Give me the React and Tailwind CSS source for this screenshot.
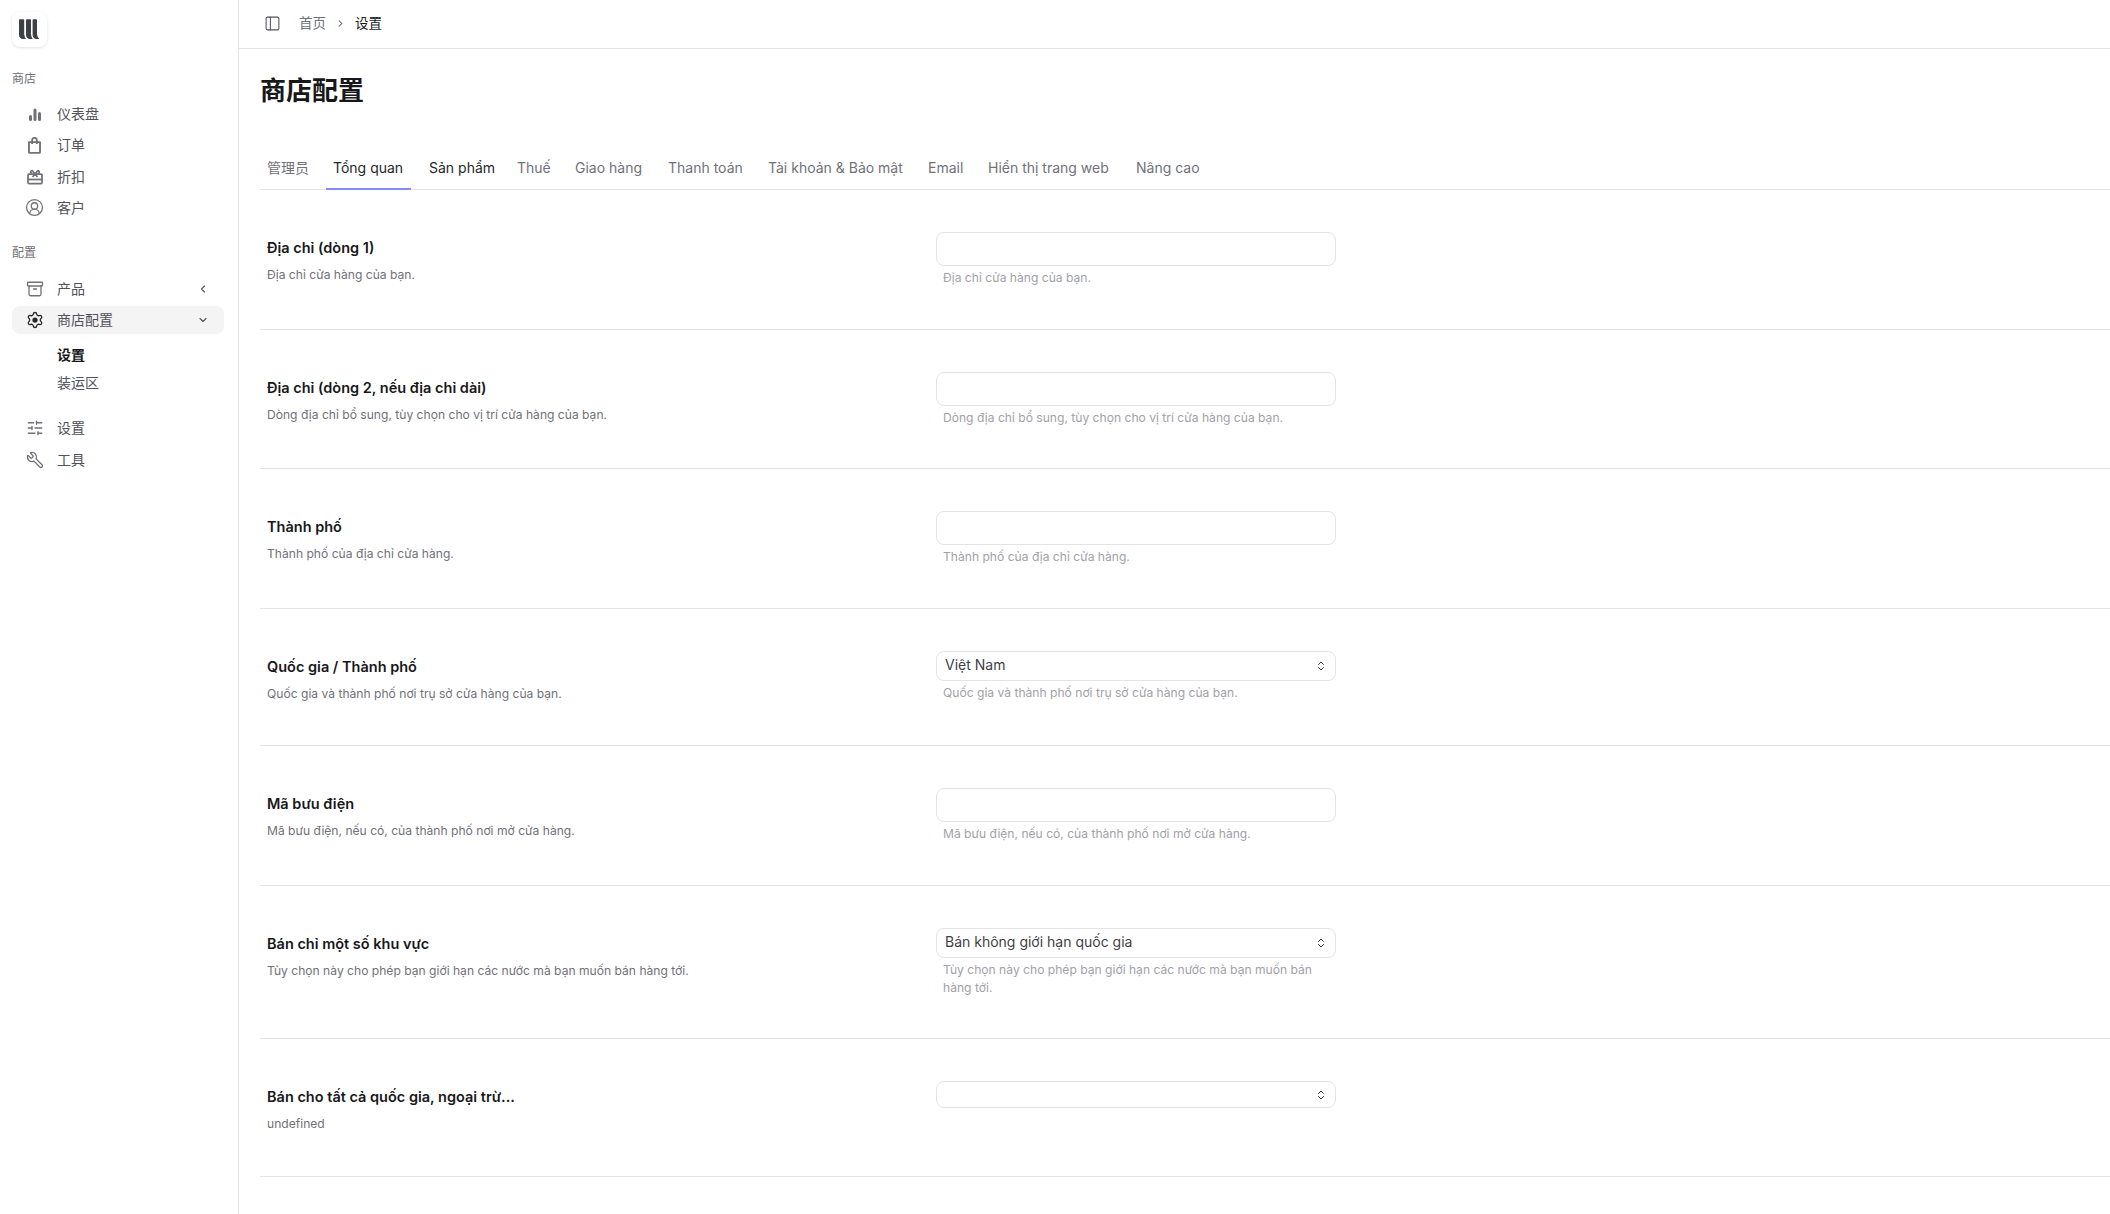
import {
  ChevronLeft,
  ChevronDown,
  ChevronsUpDown,
  ChevronRight,
  CircleUserRound,
  Archive,
  SlidersHorizontal,
  Wrench,
  PanelLeft,
} from "lucide-react";

const tabs = [
  { name: "管理员", w: "w-[55px]" },
  { name: "Tổng quan", w: "w-[85px]" },
  { name: "Sản phẩm", w: "w-[77px]" },
  { name: "Thuế", w: "w-[47px]" },
  { name: "Giao hàng", w: "w-[82px]" },
  { name: "Thanh toán", w: "w-[89px]" },
  { name: "Tài khoản & Bảo mật", w: "w-[149px]" },
  { name: "Email", w: "w-[49px]" },
  { name: "Hiển thị trang web", w: "w-[137px]" },
  { name: "Nâng cao", w: "w-[78px]" },
];

function Logo() {
  return (
    <div className="w-[35px] h-[35px] rounded-lg bg-white shadow-[0_1px_3px_rgba(0,0,0,0.12)] flex items-center justify-center">
      <svg width="21" height="21" viewBox="0 0 21 21" fill="#3f3f46">
        <path d="M0 1q0-.8.8-.8h3.6q.8 0 .8.8v13.5c0 2 .6 4 1.8 5.5H4C1.6 20 0 18.4 0 15.5z" />
        <path d="M7 1q0-.8.8-.8h3.4q.8 0 .8.8v13.5c0 2 .6 4 1.8 5.5H11c-2.4 0-4-1.6-4-4.5z" />
        <path d="M13.6 1q0-.8.8-.8h2.8q.8 0 .8.8v13.5c0 2 .8 4 2.4 5.5H17.6c-2.4 0-4-1.6-4-4.5z" />
      </svg>
    </div>
  );
}

function BarsIcon(props) {
  return (
    <svg viewBox="0 0 16 16" fill="currentColor" {...props}>
      <rect x="2" y="9" width="3" height="6" rx="1.5" />
      <rect x="6.5" y="2.5" width="3" height="12.5" rx="1.5" />
      <rect x="11" y="6" width="3" height="9" rx="1.5" />
    </svg>
  );
}

function BagIcon(props) {
  return (
    <svg viewBox="0 0 16 16" fill="none" stroke="currentColor" strokeWidth="1.3" strokeLinejoin="round" {...props}>
      <path d="M2.8 4.8h10.4v9.5a.7.7 0 0 1-.7.7h-9a.7.7 0 0 1-.7-.7z" />
      <path d="M5.8 6.5V3a2.2 2.2 0 0 1 4.4 0v3.5" />
    </svg>
  );
}

function RedeemIcon(props) {
  return (
    <svg viewBox="0 0 16 16" fill="none" stroke="currentColor" strokeWidth="1.3" strokeLinejoin="round" {...props}>
      <rect x="1" y="5" width="14" height="9.5" rx="1" />
      <path d="M1 10.5h14" />
      <path d="M8 5 5.8 2.2a1.2 1.2 0 0 0-2 1.3L5 5M8 5l2.2-2.8a1.2 1.2 0 0 1 2 1.3L11 5M8 5 5.5 8M8 5l2.5 3" />
    </svg>
  );
}

function GearIcon(props) {
  return (
    <svg viewBox="0 0 24 24" fill="none" stroke="currentColor" strokeWidth="2.2" strokeLinejoin="round" {...props}>
      <path d="M9.671 4.136a2.34 2.34 0 0 1 4.659 0 2.34 2.34 0 0 0 3.319 1.915 2.34 2.34 0 0 1 2.33 4.033 2.34 2.34 0 0 0 0 3.831 2.34 2.34 0 0 1-2.33 4.033 2.34 2.34 0 0 0-3.319 1.915 2.34 2.34 0 0 1-4.659 0 2.34 2.34 0 0 0-3.32-1.915 2.34 2.34 0 0 1-2.33-4.033 2.34 2.34 0 0 0 0-3.831A2.34 2.34 0 0 1 6.35 6.051a2.34 2.34 0 0 0 3.319-1.915" />
      <circle cx="12" cy="12" r="3.5" fill="currentColor" stroke="none" />
    </svg>
  );
}

function FlippedWrench(props) {
  return <Wrench {...props} className={`-scale-x-100 ${props.className}`} />;
}

function NavItem({ icon: Icon, size = 18, sw = 1.75, label, right, active }) {
  return (
    <div className={`flex items-center h-7 pl-[12.5px] pr-[15px] rounded-lg ${active ? "bg-[#f4f4f5]" : ""}`}>
      <span className="w-5 h-5 flex items-center justify-center">
        <Icon width={size} height={size} strokeWidth={sw} className={active ? "text-[#27272a]" : "text-[#71717a]"} />
      </span>
      <span className="ml-[12.5px] text-sm leading-5 text-[#52525b]">{label}</span>
      {right && <span className="ml-auto text-[#52525b]">{right}</span>}
    </div>
  );
}

function Sidebar() {
  return (
    <aside className="w-[239px] shrink-0 border-r border-[#e4e4e7] min-h-[1214px] pl-3 pr-[14px] pt-3">
      <Logo />
      <div className="mt-[24px] text-xs leading-4 text-[#71717a]">商店</div>
      <div className="mt-[13px] flex flex-col gap-[3.33px]">
        <NavItem icon={BarsIcon} size={16} label="仪表盘" />
        <NavItem icon={BagIcon} size={17} label="订单" />
        <NavItem icon={RedeemIcon} size={16} label="折扣" />
        <NavItem icon={CircleUserRound} size={19} sw={1.6} label="客户" />
      </div>
      <div className="mt-[23.5px] text-xs leading-4 text-[#71717a]">配置</div>
      <div className="mt-[13.5px] flex flex-col gap-[3.33px]">
        <NavItem icon={Archive} label="产品" right={<ChevronLeft size={12} strokeWidth={2.25} />} />
        <NavItem icon={GearIcon} label="商店配置" active right={<ChevronDown size={12} strokeWidth={2.25} />} />
      </div>
      <div className="mt-[7px] pl-[45px] flex flex-col">
        <div className="h-7 flex items-center text-sm font-semibold text-[#18181b]">设置</div>
        <div className="h-7 flex items-center text-sm text-[#52525b]">装运区</div>
      </div>
      <div className="mt-[17px] flex flex-col gap-[3.33px]">
        <NavItem icon={SlidersHorizontal} label="设置" />
        <NavItem icon={FlippedWrench} label="工具" />
      </div>
    </aside>
  );
}

function Input() {
  return <div className="w-[400px] h-[34px] rounded-lg border border-[#e4e4e7] bg-white" />;
}

function Select({ value, h }) {
  return (
    <div className={`w-[400px] ${h} rounded-lg border border-[#e4e4e7] bg-white flex items-center pl-2 pr-[8px] text-sm text-[#3f3f46]`}>
      <span className="pb-[2px]">{value}</span>
      <ChevronsUpDown size={12} className="ml-auto text-[#3f3f46]" />
    </div>
  );
}

function Row({ label, desc, hint, children, className }) {
  return (
    <div className={`flex border-b border-[#e4e4e7] pt-[42px] ${className}`}>
      <div className="w-[676px] shrink-0 pl-[7px]">
        <div className="mt-[6px] text-[14.5px] leading-5 font-semibold text-[#18181b]">{label}</div>
        <div className="mt-[7px] text-[12.1px] leading-5 text-[#71717a]">{desc}</div>
      </div>
      <div className="w-[400px]">
        {children}
        {hint && <div className="mt-[3px] pl-[7px] text-[12.1px] leading-[18px] text-[#a1a1aa]">{hint}</div>}
      </div>
    </div>
  );
}

export default function App() {
  return (
    <div className="flex bg-white overflow-hidden h-[1214px] font-['Inter','Noto_Sans_CJK_SC',sans-serif]">
      <Sidebar />
      <main className="flex-1 min-w-0">
        <header className="h-[49px] border-b border-[#e4e4e7] flex items-center pl-[25px] pb-[2px] text-[13.5px]">
          <PanelLeft size={17} strokeWidth={1.5} className="text-[#52525b]" />
          <span className="ml-[18px] text-[#71717a]">首页</span>
          <ChevronRight size={11} strokeWidth={2.25} className="ml-[9px] mr-[9px] text-[#52525b]" />
          <span className="text-[#18181b]">设置</span>
        </header>
        <div className="pl-[21px]">
          <h1 className="mt-[24px] text-[26px] leading-9 font-bold text-[#18181b]">商店配置</h1>
          <div className="mt-[48px] h-[33px] border-b border-[#e4e4e7] flex gap-[11px]">
            {tabs.map((t, i) => (
              <div
                key={t.name}
                className={`${t.w} shrink-0 whitespace-nowrap overflow-hidden h-[33px] px-[7px] text-sm leading-5 pt-[1px] border-b-2 ${i === 1 ? "border-[#818cf8] text-[#27272a]" : i === 2 ? "border-transparent text-[#27272a]" : "border-transparent text-[#71717a]"}`}
              >
                {t.name}
              </div>
            ))}
          </div>
          <Row className="h-[140px]" label="Địa chỉ (dòng 1)" desc="Địa chỉ cửa hàng của bạn." hint="Địa chỉ cửa hàng của bạn."><Input /></Row>
          <Row className="h-[139px]" label="Địa chỉ (dòng 2, nếu địa chỉ dài)" desc="Dòng địa chỉ bổ sung, tùy chọn cho vị trí cửa hàng của bạn." hint="Dòng địa chỉ bổ sung, tùy chọn cho vị trí cửa hàng của bạn."><Input /></Row>
          <Row className="h-[140px]" label="Thành phố" desc="Thành phố của địa chỉ cửa hàng." hint="Thành phố của địa chỉ cửa hàng."><Input /></Row>
          <Row className="h-[137px]" label="Quốc gia / Thành phố" desc="Quốc gia và thành phố nơi trụ sở cửa hàng của bạn." hint="Quốc gia và thành phố nơi trụ sở cửa hàng của bạn."><Select value="Việt Nam" h="h-[30px]" /></Row>
          <Row className="h-[140px]" label="Mã bưu điện" desc="Mã bưu điện, nếu có, của thành phố nơi mở cửa hàng." hint="Mã bưu điện, nếu có, của thành phố nơi mở cửa hàng."><Input /></Row>
          <Row className="h-[153px]" label="Bán chỉ một số khu vực" desc="Tùy chọn này cho phép bạn giới hạn các nước mà bạn muốn bán hàng tới." hint="Tùy chọn này cho phép bạn giới hạn các nước mà bạn muốn bán hàng tới."><Select value="Bán không giới hạn quốc gia" h="h-[30px]" /></Row>
          <Row className="h-[138px]" label="Bán cho tất cả quốc gia, ngoại trừ..." desc="undefined"><Select value="" h="h-[27px]" /></Row>
        </div>
      </main>
    </div>
  );
}
